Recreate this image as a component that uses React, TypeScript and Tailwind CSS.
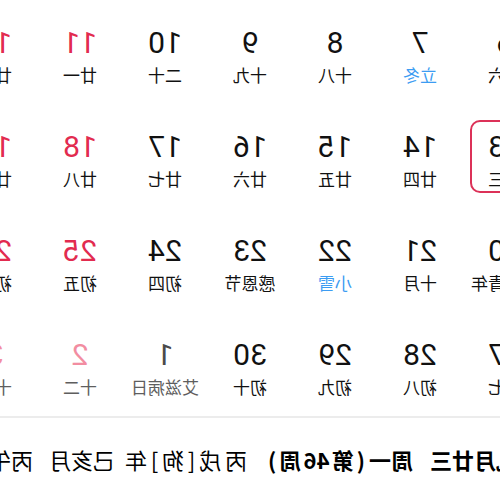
import React from 'react';

type Day = {
  n: number;
  lunar: string;
  kind?: 'weekend' | 'term' | 'next' | 'nextWeekend';
  selected?: boolean;
};

const weeks: Day[][] = [
  [
    { n: 6, lunar: '十六' },
    { n: 7, lunar: '立冬', kind: 'term' },
    { n: 8, lunar: '十八' },
    { n: 9, lunar: '十九' },
    { n: 10, lunar: '二十' },
    { n: 11, lunar: '廿一', kind: 'weekend' },
    { n: 12, lunar: '廿二', kind: 'weekend' },
  ],
  [
    { n: 13, lunar: '廿三', selected: true },
    { n: 14, lunar: '廿四' },
    { n: 15, lunar: '廿五' },
    { n: 16, lunar: '廿六' },
    { n: 17, lunar: '廿七' },
    { n: 18, lunar: '廿八', kind: 'weekend' },
    { n: 19, lunar: '廿九', kind: 'weekend' },
  ],
  [
    { n: 20, lunar: '世界青年' },
    { n: 21, lunar: '十月' },
    { n: 22, lunar: '小雪', kind: 'term' },
    { n: 23, lunar: '感恩节' },
    { n: 24, lunar: '初四' },
    { n: 25, lunar: '初五', kind: 'weekend' },
    { n: 26, lunar: '初六', kind: 'weekend' },
  ],
  [
    { n: 27, lunar: '初七' },
    { n: 28, lunar: '初八' },
    { n: 29, lunar: '初九' },
    { n: 30, lunar: '初十' },
    { n: 1, lunar: '艾滋病日', kind: 'next' },
    { n: 2, lunar: '十二', kind: 'nextWeekend' },
    { n: 3, lunar: '十三', kind: 'nextWeekend' },
  ],
];

function numColor(d: Day) {
  if (d.kind === 'weekend') return 'text-[#e22b4f]';
  if (d.kind === 'next') return 'text-[#4a4a4a]';
  if (d.kind === 'nextWeekend') return 'text-[#f28da1]';
  return 'text-[#111111]';
}

function lunarColor(d: Day) {
  if (d.kind === 'term') return 'text-[#3c9cf2]';
  if (d.kind === 'next' || d.kind === 'nextWeekend') return 'text-[#5e5e5e]';
  return 'text-[#111111]';
}

function Cell({ d }: { d: Day }) {
  return (
    <div className="h-[104px] pt-[16px]">
      <div
        className={
          'mx-auto w-[70px] h-[73px] rounded-[10px] border-2 flex flex-col items-center pt-[7px] ' +
          (d.selected ? 'border-[#dc3158]' : 'border-transparent')
        }
      >
        <div
          className={'text-[30px] leading-[36px] whitespace-nowrap ' + numColor(d)}
          style={{ fontFamily: 'Roboto, sans-serif' }}
        >
          {d.n}
        </div>
        <div
          className={'mt-[3px] text-[17px] leading-[21px] whitespace-nowrap ' + lunarColor(d)}
          style={{ fontFamily: '"Noto Sans CJK SC", sans-serif' }}
        >
          {d.lunar}
        </div>
      </div>
    </div>
  );
}

// spread the glyphs of a short text over a fixed width
function Spread({ parts, className }: { parts: string[]; className: string }) {
  return (
    <div className={'shrink-0 flex justify-between ' + className}>
      {parts.map((p, i) => (
        <span key={i}>{p}</span>
      ))}
    </div>
  );
}

export default function App() {
  return (
    <div className="w-[500px] h-[500px] overflow-hidden bg-white -scale-x-100">
      <div className="flex justify-center">
        <div className="w-[595px] shrink-0 grid grid-cols-7">
          {weeks.flat().map((d, i) => (
            <Cell key={i} d={d} />
          ))}
        </div>
      </div>
      <div className="h-[2px] bg-[#ececec]" />
      <div
        className="h-[82px] flex items-center whitespace-nowrap text-[22px] leading-[30px] text-black"
        style={{ fontFamily: '"Noto Sans CJK SC", sans-serif' }}
      >
        <div className="w-[70px] shrink-0 flex justify-end font-bold">
          <span className="shrink-0">农历九月廿三</span>
        </div>
        <Spread parts={['周', '一']} className="ml-[17px] w-[43px] font-bold" />
        <Spread parts={['(', '第', '46', '周', ')']} className="ml-[5px] w-[97px] font-bold" />
        <Spread parts={['丙', '戌', '[', '狗', ']', '年']} className="ml-[21px] w-[122px]" />
        <Spread parts={['己', '亥', '月']} className="ml-[10px] w-[62px]" />
        <span className="shrink-0 ml-[20px]">丙午日</span>
      </div>
    </div>
  );
}
